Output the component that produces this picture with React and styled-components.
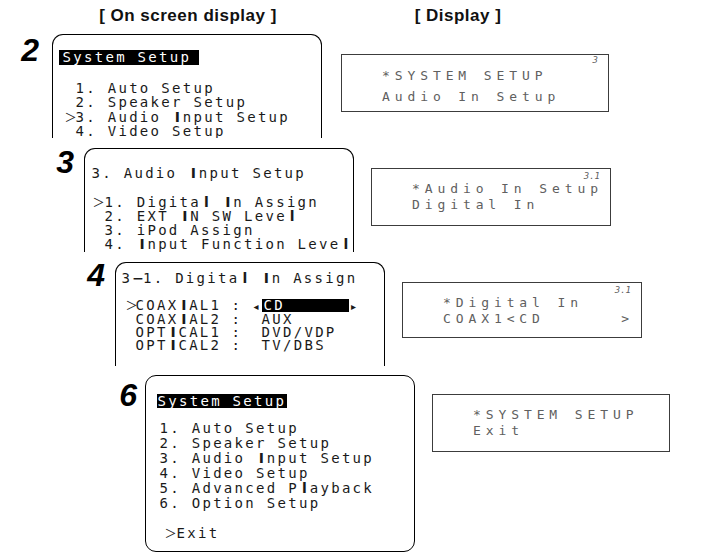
import React from 'react';
import styled, { createGlobalStyle } from 'styled-components';

const GlobalStyle = createGlobalStyle`
  html, body { margin: 0; padding: 0; background: #fff; }
  body { width: 708px; height: 554px; overflow: hidden; font-family: "Liberation Sans", Arial, sans-serif; }
`;

const Page = styled.div`
  width: 708px;
  height: 554px;
  box-sizing: border-box;
  padding-top: 6px;
  display: flex;
  flex-direction: column;
`;

const Headings = styled.div`
  display: flex;
  height: 20px;
  margin-bottom: 8px;
`;

const Heading = styled.div`
  width: ${p => p.$w}px;
  text-align: center;
  font: bold 17px/20px "Liberation Sans", Arial, sans-serif;
  letter-spacing: 0.5px;
  color: #111;
  white-space: pre;
`;

const Step = styled.div`
  display: flex;
  align-items: flex-start;
  margin-left: ${p => p.$indent}px;
  margin-top: ${p => p.$gap}px;
`;

const Num = styled.div`
  box-sizing: border-box;
  width: 48px;
  flex-shrink: 0;
  padding-right: ${p => p.$gap}px;
  margin-top: ${p => p.$mt}px;
  text-align: right;
  font: italic 700 32px/32px "Liberation Sans", Arial, sans-serif;
  color: #000;
`;

const Osd = styled.div`
  box-sizing: border-box;
  width: 270px;
  height: ${p => p.$h}px;
  flex-shrink: 0;
  border: 1.5px solid #000;
  border-bottom: ${p => (p.$open ? 'none' : '1.5px solid #000')};
  border-radius: ${p => (p.$open ? '11px 11px 0 0' : '11px')};
  overflow: hidden;
  padding: ${p => p.$pt}px 0 0 ${p => p.$pl}px;
  font-family: "DejaVu Sans Mono", monospace;
  font-size: 14px;
  letter-spacing: 2.3px;
  color: #1a1a1a;
  white-space: pre;
`;

const Title = styled.div`
  width: fit-content;
  line-height: ${p => p.$lh}px;
  padding: 0 ${p => p.$pr || 0}px 0 ${p => p.$pl || 0}px;
  background: ${p => (p.$hl ? '#000' : 'transparent')};
  color: ${p => (p.$hl ? '#fff' : '#1a1a1a')};
`;

const List = styled.div`
  margin-top: ${p => p.$mt}px;
  margin-left: ${p => p.$ml}px;
  line-height: ${p => p.$lh}px;
`;

const Item = styled.div`
  display: flex;
  align-items: baseline;
`;

const Cursor = styled.span`
  width: ${p => p.$w}px;
  flex-shrink: 0;
  font-family: "Noto Sans CJK JP", "DejaVu Sans", sans-serif;
  font-size: 12px;
  letter-spacing: 0;
  margin-left: -1px;
`;

const Cell = styled.span`
  width: ${p => p.$w}px;
  flex-shrink: 0;
  background: ${p => (p.$hl ? '#000' : 'transparent')};
  color: ${p => (p.$hl ? '#fff' : '#1a1a1a')};
  padding-left: ${p => (p.$hl ? 2 : 0)}px;
  box-sizing: border-box;
`;

const Arrow = styled.span`
  width: ${p => p.$w}px;
  flex-shrink: 0;
  font-family: "DejaVu Sans", sans-serif;
  font-size: 10px;
  letter-spacing: 0;
  text-align: ${p => p.$align};
`;

const Bar = styled.span`
  display: inline-block;
  width: 10.73px;
  text-align: center;
  font-family: "DejaVu Sans", sans-serif;
  font-weight: 700;
  letter-spacing: 0;
`;

const Lcd = styled.div`
  box-sizing: border-box;
  width: ${p => p.$w}px;
  height: ${p => p.$h}px;
  flex-shrink: 0;
  margin-top: ${p => p.$mt}px;
  margin-left: ${p => p.$ml}px;
  border: 1.5px solid #3c3c3c;
  display: flex;
  flex-direction: column;
  padding: ${p => p.$pt}px 10px 0 40px;
  font-family: "DejaVu Sans Mono", monospace;
  font-size: 13px;
  color: #606060;
  white-space: pre;
`;

const LcdIndex = styled.div`
  align-self: flex-end;
  height: 10px;
  font-size: 9px;
  line-height: 10px;
  font-style: italic;
  letter-spacing: 0;
`;

const LcdLine = styled.div`
  line-height: ${p => p.$lh}px;
  letter-spacing: 4.9px;
`;

const osd = s => {
  const out = [];
  let buf = '';
  [...s].forEach((ch, i) => {
    if (ch === 'I' || ch === 'l' || ch === '−') {
      if (buf) {
        out.push(buf);
        buf = '';
      }
      out.push(<Bar key={i}>{ch}</Bar>);
    } else buf += ch;
  });
  if (buf) out.push(buf);
  return out;
};

const Menu = ({ items, cw }) =>
  items.map(([cur, text]) => (
    <Item key={text}>
      <Cursor $w={cw}>{cur ? '＞' : ''}</Cursor>
      <span>{osd(text)}</span>
    </Item>
  ));

const Display = ({ index, lines, lh = 16, pt = 2, ...rest }) => (
  <Lcd $pt={pt} {...rest}>
    <LcdIndex>{index || ''}</LcdIndex>
    {lines.map(l => (
      <LcdLine key={l} $lh={lh}>
        {l}
      </LcdLine>
    ))}
  </Lcd>
);

const assign = [
  ['COAXIAL1', 'CD', true],
  ['COAXIAL2', 'AUX'],
  ['OPTICAL1', 'DVD/VDP'],
  ['OPTICAL2', 'TV/DBS'],
];

export default function App() {
  return (
    <Page>
      <GlobalStyle />
      <Headings>
        <Heading $w={376}>[ On screen display ]</Heading>
        <Heading $w={164}>[ Display ]</Heading>
      </Headings>

      <Step $indent={4} $gap={0}>
        <Num $gap={13} $mt={0}>2</Num>
        <Osd $h={104} $open $pt={14.5} $pl={5.5}>
          <Title $hl $lh={15} $pl={4} $pr={8}>System Setup</Title>
          <List $mt={16} $ml={7} $lh={14.5}>
            <Menu
              cw={11}
              items={[
                [false, '1. Auto Setup'],
                [false, '2. Speaker Setup'],
                [true, '3. Audio Input Setup'],
                [false, '4. Video Setup'],
              ]}
            />
          </List>
        </Osd>
        <Display
          $w={268}
          $h={58}
          $mt={20}
          $ml={19}
          pt={0}
          lh={21}
          index="3"
          lines={['*SYSTEM SETUP', 'Audio In Setup']}
        />
      </Step>

      <Step $indent={36} $gap={10}>
        <Num $gap={10} $mt={-2}>3</Num>
        <Osd $h={104} $open $pt={16.5} $pl={6.5}>
          <Title $lh={14}>{osd('3. Audio Input Setup')}</Title>
          <List $mt={15} $ml={2} $lh={14}>
            <Menu
              cw={12}
              items={[
                [true, '1. Digital In Assign'],
                [false, '2. EXT IN SW Level'],
                [false, '3. iPod Assign'],
                [false, '4. Input Function Level'],
              ]}
            />
          </List>
        </Osd>
        <Display $w={240} $h={58} $mt={20} $ml={17} index="3.1" lines={['*Audio In Setup', 'Digital In']} />
      </Step>

      <Step $indent={67} $gap={10}>
        <Num $gap={10} $mt={-3}>4</Num>
        <Osd $h={104} $open $pt={7.5} $pl={5.5}>
          <Title $lh={14}>{osd('3−1. Digital In Assign')}</Title>
          <List $mt={13} $ml={5} $lh={13.3}>
            {assign.map(([name, val, sel]) => (
              <Item key={name}>
                <Cursor $w={10}>{sel ? '＞' : ''}</Cursor>
                <Cell $w={96}>{osd(name)}</Cell>
                <Cell $w={22}>:</Cell>
                <Arrow $w={8} $align="left">{sel ? '◂' : ''}</Arrow>
                <Cell $w={87} $hl={sel}>{val}</Cell>
                <Arrow $w={10} $align="center">{sel ? '▸' : ''}</Arrow>
              </Item>
            ))}
          </List>
        </Osd>
        <Display $w={240} $h={56} $mt={20} $ml={17} index="3.1" lines={['*Digital In', 'COAX1<CD      >']} />
      </Step>

      <Step $indent={97} $gap={9}>
        <Num $gap={8} $mt={4}>6</Num>
        <Osd $h={177} $pt={17.5} $pl={10.5}>
          <Title $hl $lh={14} $pl={1} $pr={1}>System Setup</Title>
          <List $mt={13} $ml={4} $lh={15}>
            <Menu
              cw={0}
              items={[
                [false, '1. Auto Setup'],
                [false, '2. Speaker Setup'],
                [false, '3. Audio Input Setup'],
                [false, '4. Video Setup'],
                [false, '5. Advanced Playback'],
                [false, '6. Option Setup'],
              ]}
            />
          </List>
          <List $mt={14} $ml={9} $lh={15}>
            <Menu cw={12} items={[[true, 'Exit']]} />
          </List>
        </Osd>
        <Display $w={238} $h={58} $mt={19} $ml={17} lines={['*SYSTEM SETUP', 'Exit']} />
      </Step>
    </Page>
  );
}
